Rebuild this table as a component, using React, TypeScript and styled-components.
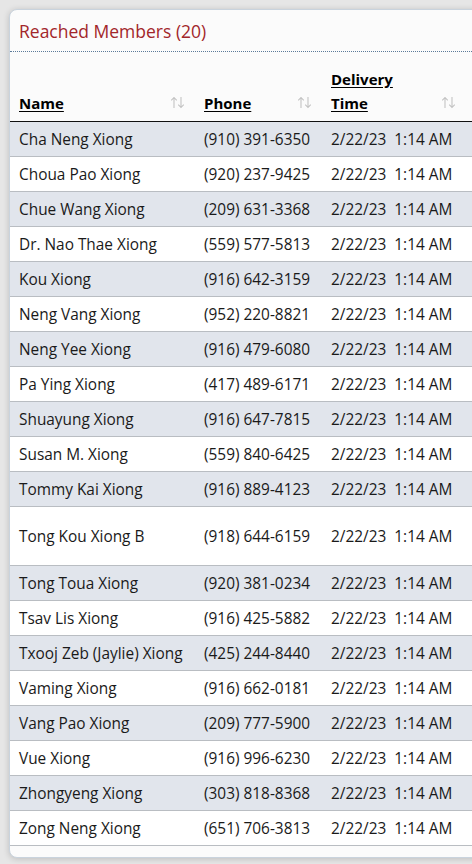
import React from "react";
import styled, { createGlobalStyle } from "styled-components";

const Global = createGlobalStyle`
  html, body { margin: 0; padding: 0; }
  body {
    background: #e6e6e6;
    font-family: "Segoe UI", "Open Sans", "Noto Sans", sans-serif;
    overflow: hidden;
    width: 472px;
    height: 864px;
  }
`;

const Page = styled.div`
  padding: 9px 0 0 9px;
`;

const Card = styled.div`
  width: 520px;
  background: #fbfbfb;
  border: 1px solid #c9d3dd;
  border-radius: 8px;
  box-shadow: 0 1px 6px rgba(0, 0, 0, 0.18);
  padding-bottom: 11px;
  overflow: hidden;
`;

const Title = styled.div`
  height: 41px;
  display: flex;
  align-items: center;
  padding-left: 9px;
  font-size: 17.5px;
  color: #a2262a;
  border-bottom: 1px dotted #5b7a99;
`;

const Table = styled.div`
  display: grid;
  grid-template-columns: 185px 127px 1fr;
`;

const HeadCell = styled.div<{ $padRight?: number }>`
  height: 70px;
  box-sizing: border-box;
  display: flex;
  align-items: flex-end;
  justify-content: space-between;
  padding: 0 ${(p) => p.$padRight ?? 10}px 6px 9px;
  border-bottom: 1.5px solid #111;
`;

const HeadLabel = styled.span<{ $narrow?: boolean }>`
  font-weight: 700;
  font-size: 15px;
  line-height: 24px;
  color: #000;
  text-decoration: underline;
  text-underline-offset: 2px;
  max-width: ${(p) => (p.$narrow ? "70px" : "none")};
`;

const SortIcon = styled.svg`
  width: 15px;
  height: 13px;
  margin-bottom: 6px;
  flex: none;
`;

const Cell = styled.div<{ $alt: boolean; $tall: boolean }>`
  height: ${(p) => (p.$tall ? "58px" : "34px")};
  display: flex;
  align-items: center;
  padding-left: 9px;
  background: ${(p) => (p.$alt ? "#e1e5ec" : "#ffffff")};
  border-bottom: 1px solid #b9bdc2;
  font-size: 15.4px;
  color: #1a1a1a;
  white-space: nowrap;
`;

const Sort = () => (
  <SortIcon viewBox="0 0 15 13">
    <g stroke="#c4c4c4" strokeWidth="1.1" fill="none">
      <path d="M4 12V1.5M1.2 4.3L4 1.5l2.8 2.8" />
      <path d="M11 1v10.5M8.2 8.7L11 11.5l2.8-2.8" />
    </g>
  </SortIcon>
);

const rows: [string, string][] = [
  ["Cha Neng Xiong", "(910) 391-6350"],
  ["Choua Pao Xiong", "(920) 237-9425"],
  ["Chue Wang Xiong", "(209) 631-3368"],
  ["Dr. Nao Thae Xiong", "(559) 577-5813"],
  ["Kou Xiong", "(916) 642-3159"],
  ["Neng Vang Xiong", "(952) 220-8821"],
  ["Neng Yee Xiong", "(916) 479-6080"],
  ["Pa Ying Xiong", "(417) 489-6171"],
  ["Shuayung Xiong", "(916) 647-7815"],
  ["Susan M. Xiong", "(559) 840-6425"],
  ["Tommy Kai Xiong", "(916) 889-4123"],
  ["Tong Kou Xiong B", "(918) 644-6159"],
  ["Tong Toua Xiong", "(920) 381-0234"],
  ["Tsav Lis Xiong", "(916) 425-5882"],
  ["Txooj Zeb (Jaylie) Xiong", "(425) 244-8440"],
  ["Vaming Xiong", "(916) 662-0181"],
  ["Vang Pao Xiong", "(209) 777-5900"],
  ["Vue Xiong", "(916) 996-6230"],
  ["Zhongyeng Xiong", "(303) 818-8368"],
  ["Zong Neng Xiong", "(651) 706-3813"],
];

export default function App() {
  return (
    <>
      <Global />
      <Page>
        <Card>
          <Title>Reached Members (20)</Title>
          <Table>
            <HeadCell>
              <HeadLabel>Name</HeadLabel>
              <Sort />
            </HeadCell>
            <HeadCell>
              <HeadLabel>Phone</HeadLabel>
              <Sort />
            </HeadCell>
            <HeadCell $padRight={74}>
              <HeadLabel $narrow>Delivery Time</HeadLabel>
              <Sort />
            </HeadCell>
            {rows.map(([name, phone], i) => {
              const alt = i % 2 === 0;
              const tall = name === "Tong Kou Xiong B";
              return (
                <React.Fragment key={name}>
                  <Cell $alt={alt} $tall={tall}>{name}</Cell>
                  <Cell $alt={alt} $tall={tall}>{phone}</Cell>
                  <Cell $alt={alt} $tall={tall}>2/22/23&nbsp;&nbsp;1:14 AM</Cell>
                </React.Fragment>
              );
            })}
          </Table>
        </Card>
      </Page>
    </>
  );
}
